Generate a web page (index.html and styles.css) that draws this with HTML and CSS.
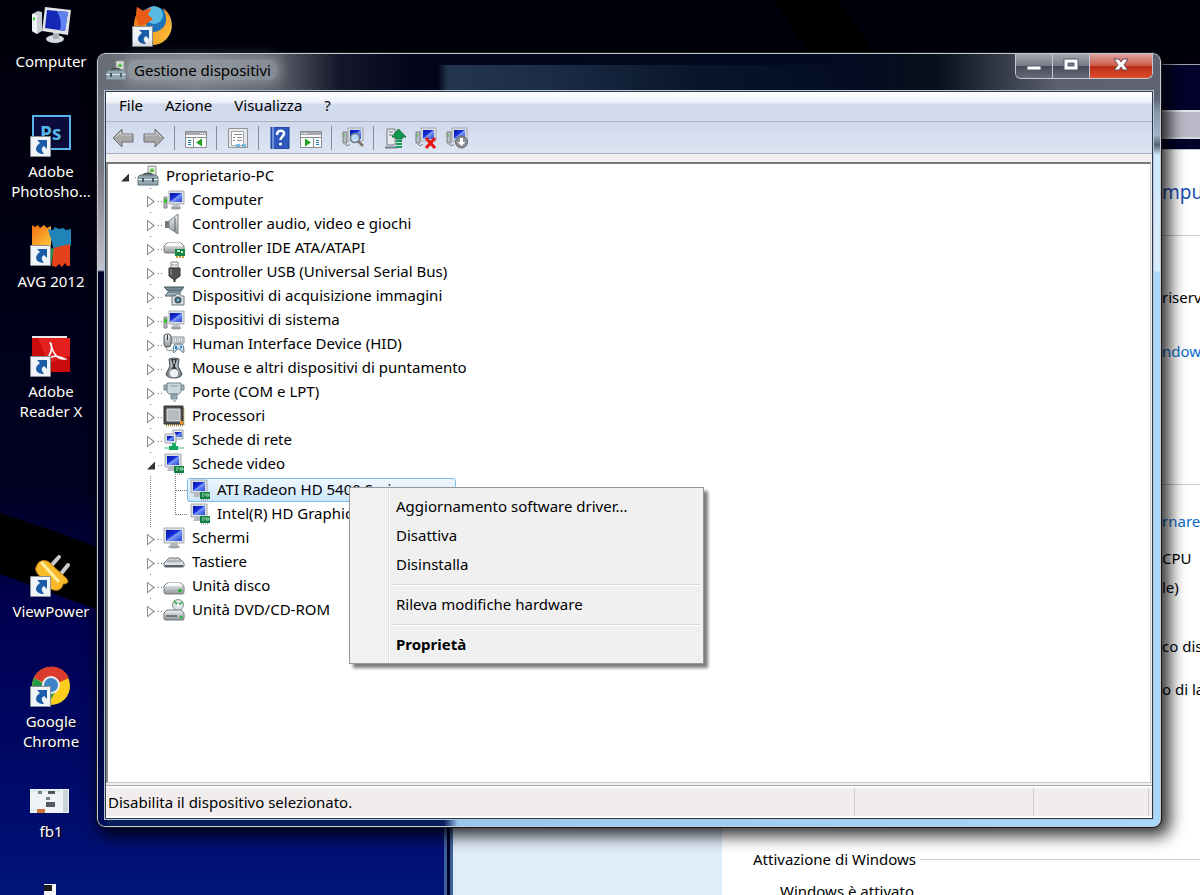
FILE: index.html
```html
<!DOCTYPE html>
<html lang="it">
<head>
  <meta charset="UTF-8">
  <title>Gestione dispositivi</title>
  <link rel="stylesheet" href="styles.css">
</head>
<body>

  <!-- icon library -->
  <svg class="defs" width="0" height="0" aria-hidden="true">
    <defs>
      <linearGradient id="screen" x1="0" y1="0" x2="1" y2="1">
        <stop offset="0" stop-color="#0713a0"/><stop offset=".45" stop-color="#1733e0"/>
        <stop offset=".5" stop-color="#7d9cf8"/><stop offset="1" stop-color="#2742d8"/>
      </linearGradient>
      <linearGradient id="metal" x1="0" y1="0" x2="0" y2="1">
        <stop offset="0" stop-color="#f4f6f7"/><stop offset="1" stop-color="#8d9499"/>
      </linearGradient>
      <linearGradient id="steel" x1="0" y1="0" x2="1" y2="0">
        <stop offset="0" stop-color="#5d666d"/><stop offset=".5" stop-color="#e6ebee"/><stop offset="1" stop-color="#59636b"/>
      </linearGradient>
      <linearGradient id="orange" x1="0" y1="0" x2="1" y2="1">
        <stop offset="0" stop-color="#ef6c12"/><stop offset="1" stop-color="#ffc93a"/>
      </linearGradient>

      <symbol id="i-shortcut" viewBox="0 0 21 21">
        <path d="M.5.5h20v20H.5z" fill="#f0f3f7" stroke="#8b8f96"/>
        <path d="M7 4h10v9l-3-3c-3 2-3 4 0 8C6 18 3 12 10 7z" fill="#1b5ca8"/>
      </symbol>

      <symbol id="i-toolbox" viewBox="0 0 22 22">
        <path d="M11 1h8v13h-8z" fill="#e3e7e6" stroke="#8b9492"/>
        <path d="M13 5l2-2 2 2v2h-4z" fill="#58c433"/>
        <path d="M5 12c1-4 9-5 12 0" fill="none" stroke="#3f4a4f" stroke-width="2"/>
        <path d="M1 12l2-2h16l2 2v8H1z" fill="#91a5ae" stroke="#5d7078"/>
        <path d="M1 14.500h20" stroke="#e3edf1"/>
        <path d="M5 13h2v4H5zM15 13h2v4h-2z" fill="#47565d"/>
      </symbol>
      <symbol id="i-pc" viewBox="0 0 22 22">
        <path d="M1 8h3v11H1z" fill="#b5babd" stroke="#858b8e"/>
        <path d="M1 10h3v4H1z" fill="#3db83a"/>
        <path d="M10 15h6l2 4H8z" fill="#c4c9cc"/><ellipse cx="13" cy="19" rx="5" ry="1.500" fill="#9aa0a4"/>
        <path d="M6 2h15v13H6z" fill="#d9dee2" stroke="#a6adb2"/>
        <path d="M7 4h12v9H7z" fill="url(#screen)"/>
      </symbol>
      <symbol id="i-speaker" viewBox="0 0 22 22">
        <path d="M2 8h5v7H2z" fill="#6f787f"/>
        <path d="M6 8l9-7v20l-9-6z" fill="url(#metal)" stroke="#7a838a"/>
        <path d="M12 5v13" stroke="#59636b"/>
      </symbol>
      <symbol id="i-disk" viewBox="0 0 22 22">
        <path d="M4 8h14l3 3v6q0 2-2 2H3q-2 0-2-2v-6z" fill="url(#metal)" stroke="#777e83"/>
        <path d="M2 11h18l-3-3H5z" fill="#fafbfb"/>
        <circle cx="17" cy="15.500" r="1.800" fill="#25b52e"/>
      </symbol>
      <symbol id="i-ide" viewBox="0 0 22 22">
        <path d="M4 6h14l3 3v6q0 1-2 1H3q-2 0-2-2V9z" fill="url(#metal)" stroke="#777e83"/>
        <path d="M2 9h18l-3-3H5z" fill="#fafbfb"/>
        <path d="M12 12h10v7H12z" fill="#178344"/><path d="M14 13h3v2h-3zM18 14h2v2h-2z" fill="#c8f1cf"/>
        <path d="M13 20h8" stroke="#cda33b" stroke-width="2" stroke-dasharray="2 1"/>
      </symbol>
      <symbol id="i-usb" viewBox="0 0 22 22">
        <path d="M8 1h7v6H8z" fill="#f1f2f3" stroke="#85898c"/><path d="M10 3v2M13 3v2" stroke="#7c7f82"/>
        <path d="M6 7h11v8l-4 3h-3l-4-3z" fill="#4e5153" stroke="#333"/><path d="M8 8v6" stroke="#9b9ea0"/>
        <path d="M11.500 18v3" stroke="#333" stroke-width="2"/>
      </symbol>
      <symbol id="i-camera" viewBox="0 0 22 22">
        <path d="M1 2h20l-3 4H5z" fill="#6f8a91" stroke="#455a60"/><path d="M5 7h13l-3 4H2z" fill="#9cb2b8" stroke="#53676d"/>
        <path d="M9 11h3l1-2h4l1 2h3v9H9z" fill="#dae1e5" stroke="#69767d"/>
        <circle cx="15" cy="15" r="3.500" fill="#46565f"/><circle cx="15" cy="15" r="1.500" fill="#6bc2e8"/>
      </symbol>
      <symbol id="i-hid" viewBox="0 0 22 22">
        <path d="M8 4h13v6H8z" fill="#e7eaec" stroke="#8a9297"/><path d="M9 6h11M9 8h11" stroke="#798186" stroke-dasharray="1 1"/>
        <rect x="1" y="1" width="7" height="13" rx="3" fill="url(#metal)" stroke="#4d5459"/><path d="M4.500 2v5" stroke="#333"/>
        <path d="M3 14c0 4 3 4 6 3" fill="none" stroke="#787f83"/>
        <path d="M12 11h7q2 1 2 8-1 2-4-3h-3q-3 5-4 3 0-7 2-8z" fill="#cfdee8" stroke="#5e7889"/>
        <path d="M13 13v3M17 14h2" stroke="#2185c9" stroke-width="2"/>
      </symbol>
      <symbol id="i-mouse" viewBox="0 0 22 22">
        <path d="M6 2q5-2 10 0l-1 7 4 8q-1 4-8 4t-8-4l4-8z" fill="url(#steel)" stroke="#444c52"/>
        <path d="M8 2l2 7-3 5q4-3 8 0l-3-5 2-7z" fill="#333b42"/><path d="M11 3v4" stroke="#fff"/>
        <ellipse cx="11" cy="16" rx="4" ry="4" fill="#edf2f5"/>
      </symbol>
      <symbol id="i-port" viewBox="0 0 22 22">
        <path d="M1 4h3v5H1zM18 4h3v5h-3z" fill="#a4b5bb" stroke="#72858c"/>
        <path d="M4 2h14v9l-2 2H6l-2-2z" fill="#cbd8dd" stroke="#728891"/>
        <path d="M8 13h6v5H8z" fill="#9fb1b8" stroke="#72858c"/><path d="M10 18h3v3h-3z" fill="#bccbd0"/>
        <path d="M7 5h8M9 15h4" stroke="#8499a1"/>
      </symbol>
      <symbol id="i-cpu" viewBox="0 0 22 22">
        <path d="M3 20h17M20 3v17" stroke="#b98a35" stroke-width="3" stroke-dasharray="1 1"/>
        <path d="M1 1h19v18H1z" fill="#4a4b4c" stroke="#333536"/><path d="M4 4h13v12H4z" fill="#b9bcbe" stroke="#dcdedf"/>
        <path d="M17 16h3v3h-3z" fill="#f49a1d"/>
      </symbol>
      <symbol id="i-net" viewBox="0 0 22 22">
        <path d="M10 1h10v9H10z" fill="#e3e7ea" stroke="#9ca4aa"/><path d="M12 3h7v5h-7z" fill="url(#screen)"/>
        <path d="M2 5h11v9H2z" fill="#e3e7ea" stroke="#9ca4aa"/><path d="M4 7h7v5H4z" fill="url(#screen)"/>
        <path d="M9 14h4v3H9z" fill="#1fae69"/><path d="M1 18h20v2H1z" fill="#a2dec0"/><path d="M6 17h9v4H6z" fill="#13a55d"/>
      </symbol>
      <symbol id="i-gpu" viewBox="0 0 22 22">
        <path d="M6 14h6l1 4H4z" fill="#b6bcc0"/>
        <path d="M2 1h16v13H2z" fill="#d9dee2" stroke="#a6adb2"/><path d="M4 3h12v9H4z" fill="url(#screen)"/>
        <path d="M11 13h10v7H11z" fill="#148047"/><path d="M13 15h3M13 17h2M17 15h3v2h-3z" stroke="#a5dcb3" fill="none"/>
        <path d="M12 21h8" stroke="#888" stroke-dasharray="1 1"/>
      </symbol>
      <symbol id="i-screen" viewBox="0 0 22 22">
        <path d="M8 16h6l2 4H6z" fill="#b2b8bc"/><ellipse cx="11" cy="20" rx="6" ry="1.500" fill="#9ea5a9"/>
        <path d="M1 1h20v15H1z" fill="#dce0e3" stroke="#a9afb4"/><path d="M3 3h16v11H3z" fill="url(#screen)"/>
      </symbol>
      <symbol id="i-keyboard" viewBox="0 0 22 22">
        <path d="M6 7h10l5 5v3q0 1-2 1H3q-2 0-2-1v-3z" fill="#e1e4e7" stroke="#697076"/>
        <path d="M6 9h11M4 11h14M5 10h13" stroke="#7e858b" stroke-dasharray="1 1"/><path d="M2 14h18v2H2z" fill="#56606a"/>
      </symbol>
      <symbol id="i-dvd" viewBox="0 0 22 22">
        <circle cx="15" cy="6" r="5.500" fill="#dfe5e4" stroke="#8b9493"/><path d="M15 6l5-3M15 6l-4-4" stroke="#47b461" stroke-width="2"/><circle cx="15" cy="6" r="1.500" fill="#fff"/>
        <path d="M4 11h14l3 3v6q0 1-2 1H3q-2 0-2-1v-6z" fill="url(#metal)" stroke="#6f767b"/>
        <path d="M3 17h11" stroke="#333"/><circle cx="18" cy="18" r="1.500" fill="#25b52e"/>
      </symbol>

      <symbol id="i-arrow" viewBox="0 0 22 22">
        <path d="M1 11L10 2v5h11v8H10v5z" fill="#a9a9a9" stroke="#6e6e6e"/>
        <path d="M4 10l5-5v3h11" fill="none" stroke="#cfcfcf"/>
      </symbol>
      <symbol id="i-pane" viewBox="0 0 22 22">
        <path d="M.5 4.500h21v16H.5z" fill="#fbfbfb" stroke="#8b8f94"/>
        <path d="M1 5h20v3H1z" fill="#a6abb1"/><path d="M15 6.500h5" stroke="#fff" stroke-dasharray="1 1"/>
        <path d="M1 10.500h20M8.500 11v9" stroke="#8b8f94"/>
        <path d="M3 13.500h3M3 15.500h3M3 17.500h3" stroke="#1783ba"/>
        <path d="M17 11.500v8l-6-4z" fill="#1ea322"/>
      </symbol>
      <symbol id="i-props" viewBox="0 0 22 22">
        <path d="M1.500 1.500h19v19h-19z" fill="#e6e8ea" stroke="#8f9499"/><path d="M4.500 4.500h12v14h-12z" fill="#fdfdfd" stroke="#a0a4a8"/>
        <path d="M7 7.500h8M10 10.500h5M10 13.500h5M6 10.500h2M6 13.500h2" stroke="#8b9095"/>
        <path d="M9 17h4v3H9zM15 17h4v3h-4z" fill="#73b9dd"/>
      </symbol>
      <symbol id="i-help" viewBox="0 0 22 22">
        <path d="M2 0h18v22H2z" fill="#2d59bd" stroke="#1b3c8e"/><path d="M3 0h2v22H3z" fill="#6f92dd"/>
        <path d="M8 8c0-6 8-5 7-1-.5 2.500-3.500 3-3.500 6" fill="none" stroke="#fff" stroke-width="2.500"/><circle cx="11.500" cy="17" r="1.600" fill="#fff"/>
      </symbol>
      <symbol id="i-device" viewBox="0 0 22 22">
        <path d="M1 5h4v11H1z" fill="#b9bec2" stroke="#777e83"/><path d="M2 7v3" stroke="#3cb93c"/>
        <path d="M3 17c2 3 4 1 5 0" fill="none" stroke="#666"/>
        <path d="M6 1h15v13H6z" fill="#dadfe2" stroke="#a2a9ae"/><path d="M8 3h11v9H8z" fill="url(#screen)"/>
      </symbol>
      <symbol id="i-scan" viewBox="0 0 22 22">
        <use href="#i-device"/>
        <circle cx="13" cy="11" r="4.500" fill="#c5e4f5" fill-opacity=".85" stroke="#657a87" stroke-width="1.500"/><path d="M16 14l5 5" stroke="#7c7468" stroke-width="2.500"/>
      </symbol>
      <symbol id="i-update" viewBox="0 0 22 22">
        <path d="M3 2h8v16H3z" fill="#e9ecee" stroke="#727b80"/><path d="M5 5h4M5 8h4" stroke="#6a7378"/><path d="M1 20.500h12" stroke="#73808a" stroke-width="2"/>
        <path d="M14.500 2L22 10h-4v2h-6v-2H8z" fill="#129a50" stroke="#0c7038"/><path d="M12 14h6M12 17h6M12 20h6" stroke="#129a50" stroke-width="2"/>
      </symbol>
      <symbol id="i-remove" viewBox="0 0 22 22">
        <use href="#i-device"/><path d="M11 11l9 10M20 11l-9 10" stroke="#e81313" stroke-width="3"/>
      </symbol>
      <symbol id="i-disable" viewBox="0 0 22 22">
        <use href="#i-device"/><circle cx="15.500" cy="15" r="6" fill="#8c9093" stroke="#64686b"/>
        <path d="M14 11h3v4h2.500l-4 4-4-4H14z" fill="#fff"/>
      </symbol>
    </defs>
  </svg>

  <svg class="wallpaper" viewBox="0 0 1200 895" preserveAspectRatio="none" aria-hidden="true">
    <path d="M0 513L60 533 120 556V618L0 574z" fill="#000"/>
    <path d="M775 0H838L880 60H812z" fill="#000"/>
  </svg>

  <main class="desktop">
    <a class="shortcut" href="#">
      <svg width="44" height="44" viewBox="0 0 44 44">
        <path d="M4 11l6-3 4 1v19l-5 3-5-3z" fill="#c9cfd2"/><path d="M4 11l5 1v19l-5-3z" fill="#f0f2f3"/><path d="M5 14l2 .5v3L5 17z" fill="#37d135"/>
        <ellipse cx="27" cy="36" rx="9" ry="4" fill="#d5dade"/><path d="M25 29l6 1v6h-6z" fill="#a9b0b5"/>
        <path d="M17 4l26 3-3 25-26-4z" fill="#dfe3e6"/><path d="M19 7l21 2-3 19-20-3z" fill="#1527b5"/><path d="M29 8l11 1-3 19-5-1c2-7 0-13-3-19z" fill="#5d83ee"/>
      </svg>
      <span>Computer</span>
    </a>
    <a class="shortcut" href="#">
      <svg width="44" height="44" viewBox="0 0 44 44">
        <rect x="5" y="3" width="37" height="33" fill="#0b0c3c" stroke="#58b4ec" stroke-width="2"/>
        <text x="12" y="27" class="ps">Ps</text>
        <use href="#i-shortcut" x="2" y="23" width="21" height="21"/>
      </svg>
      <span>Adobe Photosho...</span>
    </a>
    <a class="shortcut" href="#">
      <svg width="44" height="44" viewBox="0 0 44 44">
        <path d="M4 2l3 2 3-2 2 3 4-3 3 3 4-2v20H4z" fill="url(#orange)"/><path d="M20 6l5 1 2-3 4 2 4-1 3 2 5-1v17l-17 4z" fill="#2184b8"/>
        <path d="M25 25l17-4v22l-3 0-2-3-3 4-3-3-3 3-4-1z" fill="#e3421c"/><path d="M21 26l5-1-3 18h-3z" fill="#25944b"/>
        <use href="#i-shortcut" x="2" y="22" width="21" height="21"/>
      </svg>
      <span>AVG 2012</span>
    </a>
    <a class="shortcut" href="#">
      <svg width="44" height="44" viewBox="0 0 44 44">
        <path d="M4 3h35v3H4z" fill="#e9e9e9"/><path d="M4 5h38v34H4z" fill="#c80b0d"/><path d="M10 5h32v18L20 30z" fill="#e4211f"/>
        <path d="M22 9c4 8-1 15-5 19 7-6 12-6 20-2-8 1-13-7-14-16" fill="none" stroke="#fff" stroke-width="1.500"/>
        <use href="#i-shortcut" x="2" y="23" width="21" height="21"/>
      </svg>
      <span>Adobe Reader X</span>
    </a>
    <a class="shortcut after-gap" href="#">
      <svg width="44" height="44" viewBox="0 0 44 44">
        <path d="M22 14l9-10M32 22l8-10" stroke="#c8cbd0" stroke-width="4" stroke-linecap="round"/>
        <path d="M9 12c2-5 9-6 13-2l16 15c4 4 1 6-3 6-1 8-11 8-15 2L9 20q-3-4 0-8z" fill="#f8b92a" stroke="#bf7812"/>
        <path d="M13 9l18 20" stroke="#fff0a0" stroke-width="3"/>
        <use href="#i-shortcut" x="2" y="23" width="21" height="21"/>
      </svg>
      <span>ViewPower</span>
    </a>
    <a class="shortcut" href="#">
      <svg width="44" height="44" viewBox="0 0 44 44">
        <circle cx="23" cy="23" r="19" fill="#f9cf1b"/><path d="M23 23L6 15a19 19 0 0 1 35 0z" fill="#dc3c2e"/><path d="M6 15a19 19 0 0 0 14 27l8-15z" fill="#23994a"/>
        <circle cx="23" cy="22" r="9" fill="#eee"/><circle cx="23" cy="22" r="7" fill="#3b82c8"/>
        <use href="#i-shortcut" x="2" y="23" width="21" height="21"/>
      </svg>
      <span>Google Chrome</span>
    </a>
    <a class="shortcut" href="#">
      <svg width="44" height="44" viewBox="0 0 44 44">
        <path d="M2 16h39v24H2z" fill="#f0f3f6"/><path d="M35 17h5v22h-5z" fill="#cbd4db"/><path d="M3 18h30M3 37h5" stroke="#cfdbe6"/>
        <path d="M10 18h4v3h-4zM18 24h4v3h-4z" fill="#71848d"/><path d="M20 18h7v3h-7zM18 29h9v5h-9z" fill="#565764"/><path d="M9 36h8v4H9z" fill="#cc723b"/>
      </svg>
      <span>fb1</span>
    </a>
    <a class="shortcut" href="#" aria-label="Documento">
      <svg width="44" height="44" viewBox="0 0 44 44"><path d="M16 1h12v30H16z" fill="#f4f4f4"/><path d="M16 2h8v6h-8z" fill="#1c1c1c"/></svg>
    </a>
    <a class="shortcut second-column" href="#" aria-label="Firefox">
      <svg width="44" height="44" viewBox="0 0 44 44">
        <circle cx="24" cy="22" r="18" fill="#1c72b8"/><circle cx="24" cy="12" r="9" fill="#58bbe2"/>
        <path d="M33 5c14 10 11 34-8 37C8 43 0 28 6 12l1-8 6 4 8-3-3 7 5 4-7 5c1 8 8 10 14 6 7-4 8-12 3-22z" fill="url(#orange)"/>
        <path d="M7 4l6 4 8-3-3 7 5 4-7 5-7 2-3-8z" fill="#e95a16"/>
        <use href="#i-shortcut" x="2" y="23" width="21" height="21"/>
      </svg>
    </a>
  </main>

  <!-- window behind -->
  <section class="window-back">
    <div class="back-title"></div>
    <div class="back-address"></div>
    <div class="back-edge"></div>
    <div class="back-body">
      <div class="back-side"></div>
      <div class="back-pane">
        <div class="sliver">
          <h1>mpu</h1>
          <hr>
          <p class="rights">riserv</p>
          <a class="edition" href="#">ndow</a>
          <hr class="system">
          <a class="rating" href="#">rnare I</a>
          <p class="cpu">CPU</p>
          <p class="type">le)</p>
          <p class="disk">co dis</p>
          <p class="lan">o di la</p>
        </div>
        <h2>Attivazione di Windows</h2>
        <p class="activated">Windows è attivato</p>
      </div>
    </div>
  </section>

  <section class="window">
    <header class="titlebar">
      <svg width="22" height="22"><use href="#i-toolbox"/></svg>
      <span class="title">Gestione dispositivi</span>
      <div class="caption">
        <button aria-label="Riduci a icona"><svg width="18" height="16" viewBox="0 0 18 16"><path d="M2 9h14v4H2z" fill="#fff" stroke="#555a66"/></svg></button>
        <button aria-label="Ingrandisci"><svg width="18" height="16" viewBox="0 0 18 16"><path fill-rule="evenodd" d="M2 2h14v11H2zM6 6v3h6V6z" fill="#fff" stroke="#555a66"/></svg></button>
        <button class="close" aria-label="Chiudi"><svg width="18" height="16" viewBox="0 0 18 16"><path d="M2 2h5l2 3 2-3h5l-4 6 4 5h-5l-2-3-2 3H2l4-5z" fill="#fff" stroke="#6b4750"/></svg></button>
      </div>
    </header>

    <div class="client">
      <nav class="menubar">
        <button>File</button>
        <button>Azione</button>
        <button>Visualizza</button>
        <button>?</button>
      </nav>

      <div class="toolbar">
        <button aria-label="Indietro"><svg><use href="#i-arrow"/></svg></button>
        <button class="flip" aria-label="Avanti"><svg><use href="#i-arrow"/></svg></button>
        <i></i>
        <button aria-label="Mostra albero"><svg><use href="#i-pane"/></svg></button>
        <i></i>
        <button aria-label="Proprietà"><svg><use href="#i-props"/></svg></button>
        <i></i>
        <button aria-label="Guida"><svg><use href="#i-help"/></svg></button>
        <button class="flip" aria-label="Mostra riquadro azioni"><svg><use href="#i-pane"/></svg></button>
        <i></i>
        <button aria-label="Rileva modifiche hardware"><svg><use href="#i-scan"/></svg></button>
        <i></i>
        <button aria-label="Aggiorna driver"><svg><use href="#i-update"/></svg></button>
        <button aria-label="Disinstalla"><svg><use href="#i-remove"/></svg></button>
        <button aria-label="Disattiva"><svg><use href="#i-disable"/></svg></button>
      </div>

      <div class="tree">
        <div class="row root open"><svg><use href="#i-toolbox"/></svg><span>Proprietario-PC</span></div>
        <ul>
          <li class="row"><svg><use href="#i-pc"/></svg><span>Computer</span></li>
          <li class="row"><svg><use href="#i-speaker"/></svg><span>Controller audio, video e giochi</span></li>
          <li class="row"><svg><use href="#i-ide"/></svg><span>Controller IDE ATA/ATAPI</span></li>
          <li class="row"><svg><use href="#i-usb"/></svg><span>Controller USB (Universal Serial Bus)</span></li>
          <li class="row"><svg><use href="#i-camera"/></svg><span>Dispositivi di acquisizione immagini</span></li>
          <li class="row"><svg><use href="#i-pc"/></svg><span>Dispositivi di sistema</span></li>
          <li class="row"><svg><use href="#i-hid"/></svg><span>Human Interface Device (HID)</span></li>
          <li class="row"><svg><use href="#i-mouse"/></svg><span>Mouse e altri dispositivi di puntamento</span></li>
          <li class="row"><svg><use href="#i-port"/></svg><span>Porte (COM e LPT)</span></li>
          <li class="row"><svg><use href="#i-cpu"/></svg><span>Processori</span></li>
          <li class="row"><svg><use href="#i-net"/></svg><span>Schede di rete</span></li>
          <li>
            <div class="row open"><svg><use href="#i-gpu"/></svg><span>Schede video</span></div>
            <ul class="devices">
              <li class="device selected"><svg><use href="#i-gpu"/></svg><span>ATI Radeon HD 5400 Series</span></li>
              <li class="device"><svg><use href="#i-gpu"/></svg><span>Intel(R) HD Graphics</span></li>
            </ul>
          </li>
          <li class="row"><svg><use href="#i-screen"/></svg><span>Schermi</span></li>
          <li class="row"><svg><use href="#i-keyboard"/></svg><span>Tastiere</span></li>
          <li class="row"><svg><use href="#i-disk"/></svg><span>Unità disco</span></li>
          <li class="row"><svg><use href="#i-dvd"/></svg><span>Unità DVD/CD-ROM</span></li>
        </ul>
      </div>

      <footer class="statusbar">
        <span>Disabilita il dispositivo selezionato.</span>
        <span></span>
        <span></span>
      </footer>
    </div>
  </section>

  <div class="context-menu">
    <button>Aggiornamento software driver...</button>
    <button>Disattiva</button>
    <button>Disinstalla</button>
    <hr>
    <button>Rileva modifiche hardware</button>
    <hr>
    <button class="default">Proprietà</button>
  </div>

</body>
</html>
```
FILE: styles.css
```css
* {
  box-sizing: border-box;
}

body {
  position: relative;
  margin: 0;
  height: 100vh;
  overflow: hidden;
  font-family: "Noto Sans", "Open Sans", sans-serif;
  font-size: 15px;
  line-height: 20px;
  color: #000;
  background: linear-gradient(#00000c 0, #000010 20%, #010124 55%, #000050 68%, #000a6a 88%, #001478 100%);
}

button {
  padding: 0;
  border: 0;
  background: none;
  font: inherit;
  color: inherit;
}

a {
  color: inherit;
  text-decoration: none;
}

ul {
  margin: 0;
  padding: 0;
  list-style: none;
}

.defs {
  position: absolute;
}

.wallpaper {
  position: absolute;
  width: 100%;
  height: 100%;
}

/* desktop icons */
.desktop {
  position: absolute;
  left: 0;
  top: 0;
  display: grid;
  grid-template-rows: repeat(9, 110px);
  grid-auto-flow: column;
  grid-auto-columns: 102px;
}

.shortcut {
  display: flex;
  flex-direction: column;
  align-items: center;
  gap: 4px;
  padding: 3px 8px 0;
  color: #fff;
  text-align: center;
  text-shadow: 1px 1px 2px #000;
}

.shortcut svg {
  margin-right: 3px;
}

.after-gap {
  grid-row: 6;
}

.second-column {
  grid-column: 2;
  grid-row: 1;
}

.ps {
  font: bold 19px "Open Sans", sans-serif;
  fill: #58b4ec;
}

/* window behind */
.window-back {
  position: absolute;
  left: 444px;
  right: 0;
  top: 64px;
  bottom: 0;
  display: flex;
  flex-direction: column;
  border-left: 9px double #3d5f9c;
  border-top: 1px solid #a7a7b3;
  background: #02022b;
  overflow: hidden;
}

.back-title {
  flex: none;
  height: 45px;
}

.back-address {
  flex: none;
  height: 29px;
  border-top: 2px solid #e4e4ea;
  border-bottom: 2px solid #d6d6dd;
  background: #b9b9c7;
}

.back-edge {
  flex: none;
  height: 11px;
  border-bottom: 1px solid #c4c4d0;
}

.back-body {
  flex: 1;
  display: flex;
  min-height: 0;
  background: #fff;
}

.back-side {
  width: 269px;
  background: #dfecf9;
}

.back-pane {
  flex: 1;
  padding-left: 31px;
}

.back-pane h1,
.back-pane h2,
.back-pane p {
  margin: 0;
  font-size: 15px;
  font-weight: normal;
  white-space: nowrap;
}

.sliver {
  width: 38px;
  margin-left: auto;
}

.sliver a {
  display: block;
  color: #0a6cc9;
  white-space: nowrap;
}

.back-pane h1 {
  padding-top: 32px;
  font-size: 19px;
  color: #1c4fb4;
}

.sliver hr {
  margin: 33px 0 0;
  border: 0;
  border-top: 1px solid #ccc;
}

.sliver .rights { margin-top: 51px; }
.sliver .edition { margin-top: 34px; }
.sliver .system { margin-top: 123px; }
.sliver .rating { margin-top: 26px; }
.sliver .cpu { margin-top: 17px; }
.sliver .type { margin-top: 9px; }
.sliver .disk { margin-top: 39px; }
.sliver .lan { margin-top: 23px; }

.back-pane h2 {
  display: flex;
  align-items: center;
  gap: 4px;
  margin-top: 150px;
}

.back-pane h2::after {
  content: "";
  flex: 1;
  border-top: 1px solid #ccc;
}

.back-pane .activated {
  margin: 12px 0 0 27px;
}

/* main window */
.window {
  position: absolute;
  left: 97px;
  right: 39px;
  top: 53px;
  bottom: 68px;
  display: flex;
  flex-direction: column;
  padding: 0 7px 7px;
  border: 1px solid #c5cad2;
  border-radius: 8px;
  outline: 1px solid #16181c;
  background:
    linear-gradient(#5d6170 0, #60677a 10px, #8296a8 20px, #9fb4c6 45px, #50626f 55px, #cfe8fb 65px, #d6ecfc 180px, #a8d8fb 183px) right 36px / 9px 100% no-repeat,
    linear-gradient(#6e7078 0, #777883 80px, #c3c3d0 180px, #02022b 182px, #01012c 70%, #001060 100%) left 36px / 9px 100% no-repeat,
    linear-gradient(90deg, #061c5c 0, #061c5c 346px, #96c8ee 360px, #a8d8fb 100%) left bottom / 100% 9px no-repeat,
    linear-gradient(90deg, transparent 340px, #24364f 350px, #1b2c45 450px, #08162c 600px, transparent 780px) 0 11px / 100% 26px no-repeat,
    linear-gradient(90deg, #696d76 0, #74777e 100px, #5a5e68 180px, #14182a 240px, #03051a 320px, #030b20 760px, #08101c 840px, #5c6070 960px, #5f6374 100%);
  box-shadow: 5px 5px 16px 4px rgba(0, 0, 0, .8);
}

.titlebar {
  display: flex;
  align-items: flex-start;
  height: 37px;
}

.titlebar > svg {
  margin-top: 6px;
}

.title {
  margin: 6px 0 0 1px;
  padding: 0 6px;
  border-radius: 8px;
  background: rgba(176, 184, 192, .5);
  box-shadow: 0 0 12px 4px rgba(176, 184, 192, .5);
}

.caption {
  display: flex;
  margin-left: auto;
  border: 1px solid #c5c8d0;
  border-top: 0;
  border-radius: 0 0 6px 6px;
  overflow: hidden;
}

.caption button {
  display: flex;
  align-items: center;
  justify-content: center;
  width: 37px;
  height: 24px;
  padding-bottom: 2px;
  border-right: 1px solid #c5c8d0;
  background: linear-gradient(#a6a8b1, #777b87 48%, #444957 50%, #666b7a);
}

.caption .close {
  width: 62px;
  border-right: 0;
  background: linear-gradient(#dba49f, #cf5c4b 48%, #b92c14 50%, #e04e2e);
}

.client {
  flex: 1;
  display: flex;
  flex-direction: column;
  min-height: 0;
  border: 1px solid #2d3a4a;
  outline: 1px solid #b7c4d3;
  background: #f0f0f0;
}

.menubar {
  display: flex;
  gap: 22px;
  height: 30px;
  padding: 0 13px 3px;
  border-bottom: 1px solid #adb3bf;
  background: linear-gradient(#fff, #eceff8 11px, #d1daec 12px, #d3dcee);
}

.toolbar {
  display: flex;
  align-items: center;
  gap: 9px;
  height: 32px;
  padding: 0 6px;
  border-bottom: 1px solid #a9b0bd;
  background: linear-gradient(#d0d9eb, #dde5f4);
}

.toolbar button,
.toolbar svg {
  display: block;
  width: 22px;
  height: 22px;
}

.toolbar i {
  width: 2px;
  height: 24px;
  border-left: 1px solid #838b99;
}

.flip svg {
  transform: scaleX(-1);
}

/* device tree */
.tree {
  flex: 1;
  margin: 8px 1px 3px 0;
  border: 1px solid #c8c8c8;
  border-top: 2px solid #777;
  border-left: 2px solid #888;
  background: #fff;
  white-space: nowrap;
}

.row {
  display: flex;
  align-items: center;
  gap: 7px;
  height: 24px;
}

.row::before {
  content: "";
  width: 16px;
  height: 24px;
  margin-right: -7px;
  background:
    linear-gradient(90deg, #777 1px, transparent 1px) right 13px / 2px 1px no-repeat,
    linear-gradient(90deg, #777 1px, transparent 1px) 11px 13px / 2px 1px no-repeat,
    linear-gradient(#777, #777) 3px 0 / 1px 1px no-repeat;
}

.row svg,
.device svg {
  flex: none;
  width: 22px;
  height: 22px;
}

.row span,
.device span {
  padding-bottom: 2px;
}

.tree ul .row {
  padding-left: 40px;
}

.tree .root {
  padding-left: 14px;
}

.root::before {
  background: linear-gradient(90deg, #777 1px, transparent 1px) right 13px / 2px 1px no-repeat;
}

/* arrows drawn with a clipped box over the dotted line */
.row::after {
  content: "";
  order: -1;
  width: 8px;
  height: 12px;
  margin: 3px -15px 0 -1px;
  background: #8d8d8d;
  clip-path: polygon(evenodd, 0 0, 8px 6px, 0 12px, 0 0, 1px 2px, 1px 10px, 6px 6px, 1px 2px);
}

.row.open::after {
  height: 8px;
  background: #333;
  clip-path: polygon(100% 0, 100% 100%, 0 100%);
}

.devices {
  padding-top: 2px;
  background:
    repeating-linear-gradient(#777 0 1px, transparent 1px 2px) 42px 0 / 1px 100% no-repeat,
    repeating-linear-gradient(#777 0 1px, transparent 1px 2px) 67px 0 / 1px 39px no-repeat;
}

.device {
  display: flex;
  align-items: center;
  gap: 6px;
  width: 269px;
  height: 24px;
  margin-left: 79px;
  padding-left: 2px;
  border: 1px solid transparent;
}

.device::before {
  content: "";
  width: 12px;
  height: 1px;
  margin: 0 -5px 0 -14px;
  background: repeating-linear-gradient(90deg, #777 0 1px, transparent 1px 2px);
}

.selected {
  border-color: #7dbde8;
  border-radius: 3px;
  background: linear-gradient(#eef7fe, #cde6fa);
}

.statusbar {
  display: flex;
  height: 32px;
  border-top: 2px solid #fff;
  border-bottom: 2px solid #fff;
  background: #f1edec;
  line-height: 28px;
  box-shadow: 0 -1px #aaa;
}

.statusbar span {
  width: 179px;
  border-right: 1px solid #ccc;
}

.statusbar span:first-child {
  flex: 1;
  padding-left: 2px;
}

.statusbar span:last-child {
  width: 115px;
  margin-right: 3px;
}

/* context menu */
.context-menu {
  position: absolute;
  left: 349px;
  top: 487px;
  width: 355px;
  padding: 4px 2px;
  border: 1px solid #979797;
  background: linear-gradient(90deg, #f1f1f1 38px, #dedede 38px, #dedede 39px, #fff 39px, #fff 40px, #f0f0f0 40px);
  box-shadow: 4px 4px 3px rgba(0, 0, 0, .5);
}

.context-menu button {
  display: block;
  width: 100%;
  height: 29px;
  padding: 0 0 2px 44px;
  text-align: left;
}

.context-menu hr {
  height: 2px;
  margin: 5px 1px 4px 39px;
  border: 0;
  border-top: 1px solid #dcdcdc;
  border-bottom: 1px solid #fff;
}

.context-menu .default {
  font-weight: bold;
}
```
